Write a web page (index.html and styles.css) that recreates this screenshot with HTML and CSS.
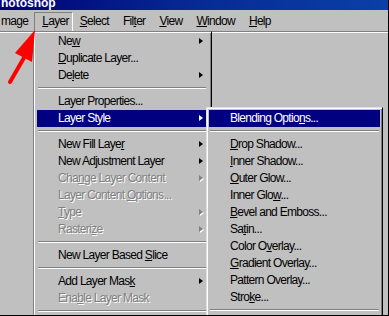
FILE: index.html
```html
<!DOCTYPE html>
<html>
<head>
<meta charset="utf-8">
<link rel="stylesheet" href="styles.css">
</head>
<body>
<div class="screen">
  <div class="titlebar"><span class="title-text">hotoshop</span></div>
  <div class="menubar">
    <span class="mb-item cut">mage</span>
    <span class="mb-item open"><u>L</u>ayer</span>
    <span class="mb-item"><u>S</u>elect</span>
    <span class="mb-item">Fil<u>t</u>er</span>
    <span class="mb-item"><u>V</u>iew</span>
    <span class="mb-item"><u>W</u>indow</span>
    <span class="mb-item"><u>H</u>elp</span>
  </div>
  <div class="client"></div>

  <div class="menu main">
    <div class="row"><span>Ne<u>w</u></span><span class="arrow"></span></div>
    <div class="row"><span><u>D</u>uplicate Layer...</span></div>
    <div class="row"><span>De<u>l</u>ete</span><span class="arrow"></span></div>
    <div class="sep"></div>
    <div class="row"><span>Layer Properties...</span></div>
    <div class="row hl"><span>Layer Style</span><span class="arrow"></span></div>
    <div class="sep"></div>
    <div class="row"><span>New Fill Laye<u>r</u></span><span class="arrow"></span></div>
    <div class="row"><span>New Adjustment Layer</span><span class="arrow"></span></div>
    <div class="row dis"><span>Cha<u>n</u>ge Layer Content</span><span class="arrow"></span></div>
    <div class="row dis"><span>Layer Content <u>O</u>ptions...</span></div>
    <div class="row dis"><span><u>T</u>ype</span><span class="arrow"></span></div>
    <div class="row dis"><span>Rasteri<u>z</u>e</span><span class="arrow"></span></div>
    <div class="sep"></div>
    <div class="row"><span>New Layer Based <u>S</u>lice</span></div>
    <div class="sep"></div>
    <div class="row"><span>Add Layer Mas<u>k</u></span><span class="arrow"></span></div>
    <div class="row dis"><span>Ena<u>b</u>le Layer Mask</span></div>
    <div class="sep"></div>
  </div>

  <div class="menu sub">
    <div class="row hl"><span>Blending Optio<u>n</u>s...</span></div>
    <div class="sep"></div>
    <div class="row"><span><u>D</u>rop Shadow...</span></div>
    <div class="row"><span><u>I</u>nner Shadow...</span></div>
    <div class="row"><span><u>O</u>uter Glow...</span></div>
    <div class="row"><span>Inner Glo<u>w</u>...</span></div>
    <div class="row"><span><u>B</u>evel and Emboss...</span></div>
    <div class="row"><span>Sa<u>t</u>in...</span></div>
    <div class="row"><span>Color O<u>v</u>erlay...</span></div>
    <div class="row"><span><u>G</u>radient Overlay...</span></div>
    <div class="row"><span>Pattern Overla<u>y</u>...</span></div>
    <div class="row"><span>Stro<u>k</u>e...</span></div>
    <div class="sep"></div>
  </div>

  <svg class="pointer" width="45" height="62" viewBox="0 25 45 62">
    <polygon points="35,30 15,53 32,62" fill="#f00"/>
    <line x1="25" y1="56" x2="10" y2="82" stroke="#f00" stroke-width="4" stroke-linecap="round"/>
  </svg>
</div>
</body>
</html>
```
FILE: styles.css
```css
body {
  margin: 0;
}

.screen {
  position: relative;
  width: 388px;
  height: 315px;
  border-right: 1px solid #000;
  border-bottom: 1px solid #000;
  overflow: hidden;
  background: #c0c0c0;
  font-family: "Liberation Sans", Arial, sans-serif;
  font-size: 12px;
  letter-spacing: -0.7px;
  color: #000;
}

.titlebar {
  height: 10px;
  overflow: hidden;
  background: linear-gradient(90deg, #000076 0%, #062a94 50%, #0a40a8 100%);
  color: #fff;
  font-weight: bold;
}

.title-text {
  display: block;
  line-height: 12px;
  margin-top: -3px;
  padding-left: 1px;
  letter-spacing: 0;
}

.menubar {
  display: flex;
  height: 21px;
  align-items: flex-start;
}

.mb-item {
  margin-top: 2px;
  padding: 0 6px 2px;
  line-height: 16px;
  border: 1px solid transparent;
  border-bottom: 0;
  white-space: nowrap;
}

.mb-item.cut {
  padding-left: 0;
  padding-right: 5px;
}

.mb-item.open {
  padding: 0 3px 2px 7px;
  border-color: #808080 #fff transparent #808080;
}

.client {
  height: 284px;
  border-top: 1px solid #808080;
  box-shadow: inset 0 1px #fff;
}

.menu {
  position: absolute;
  background: #c0c0c0;
  border: 1px solid;
  box-shadow: inset 1px 1px #fff, inset -1px -1px #808080;
}

.menu.main {
  top: 31px;
  left: 33px;
  width: 170px;
  padding: 1px 4px 0 3px;
  border-color: #808080 #000 #000 #808080;
  z-index: 1;
}

.menu.sub {
  top: 107px;
  left: 206px;
  width: 171px;
  padding: 2px 2px 1px 2px;
  border-color: #dfdfdf #000 #000 #dfdfdf;
  z-index: 2;
}

.row {
  display: flex;
  align-items: center;
  height: 17px;
  line-height: 17px;
  padding: 0 4px 0 21px;
  white-space: nowrap;
}

.row.hl {
  background: #000080;
  color: #fff;
}

.row.dis {
  color: #808080;
  text-shadow: 1px 1px 0 #fff;
}

.arrow {
  margin-left: auto;
  margin-bottom: 2px;
  width: 0;
  height: 0;
  border-left: 4px solid currentColor;
  border-top: 3.5px solid transparent;
  border-bottom: 3.5px solid transparent;
}

.row.dis .arrow {
  filter: drop-shadow(1px 1px 0 #fff);
}

.sep {
  height: 9px;
  box-sizing: border-box;
  padding-top: 3px;
  margin: 0 1px;
}

.sep::before {
  content: "";
  display: block;
  border-top: 1px solid #808080;
  border-bottom: 1px solid #fff;
}

.pointer {
  position: absolute;
  left: 0;
  top: 25px;
  z-index: 3;
}
```
